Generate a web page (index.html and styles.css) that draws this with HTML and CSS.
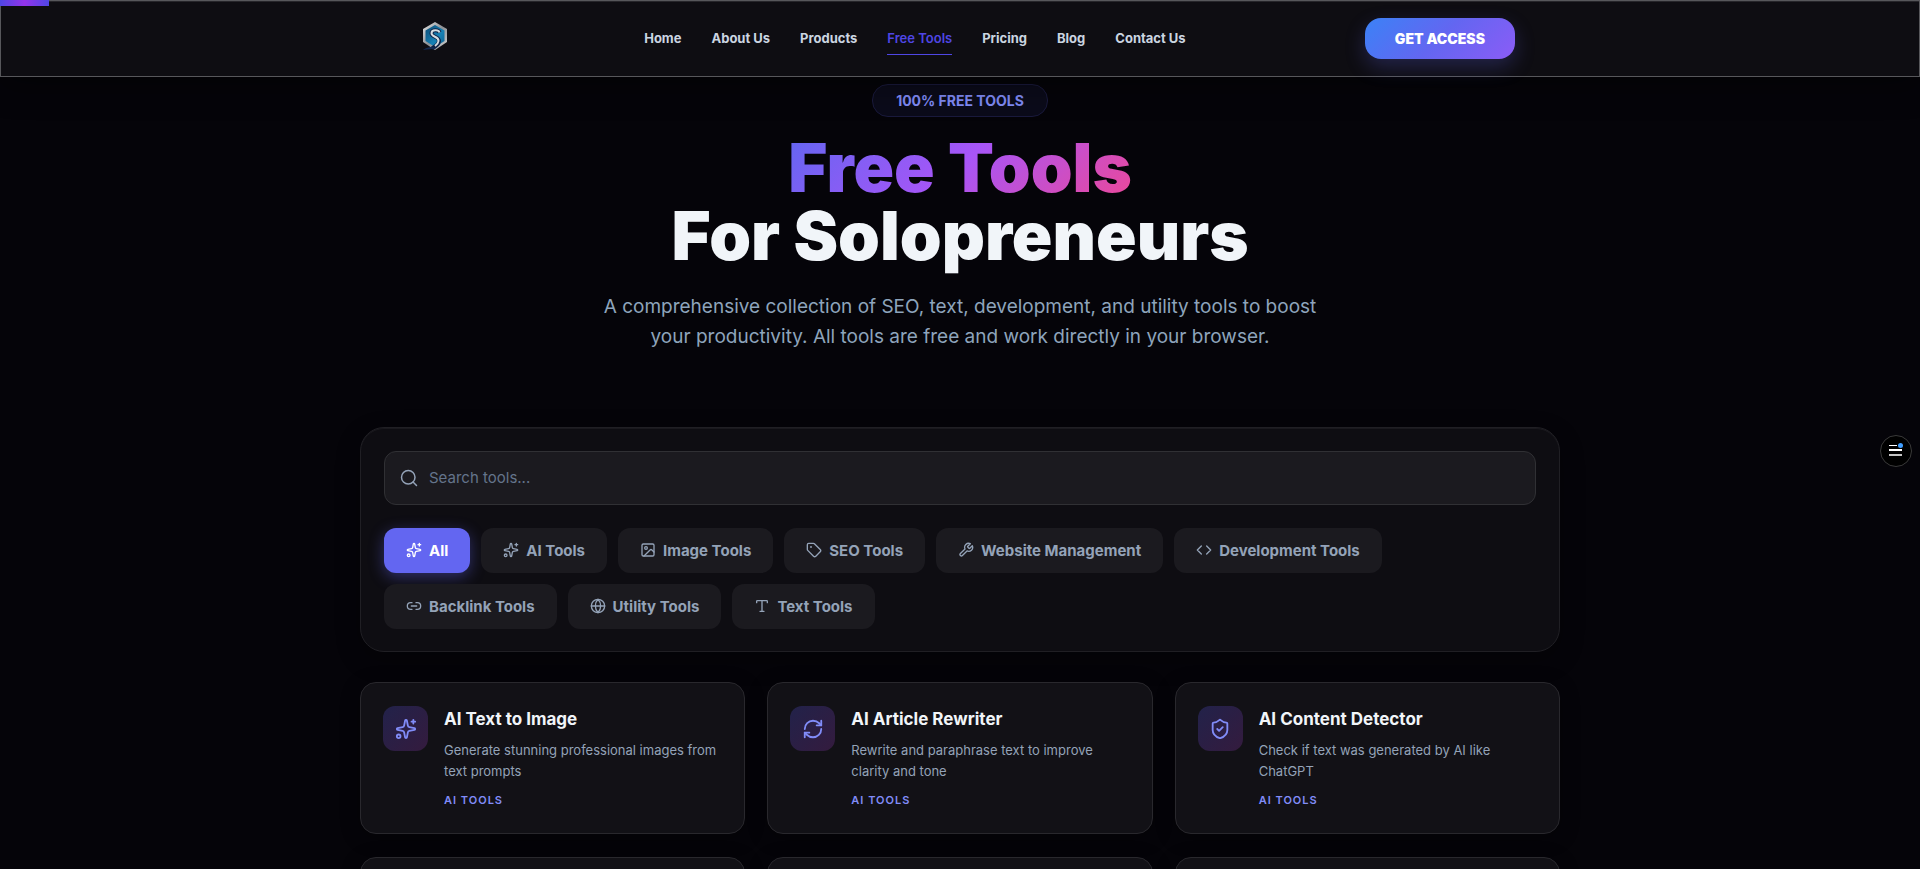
FILE: index.html
```html
<!DOCTYPE html>
<html lang="en">
<head>
    <meta charset="UTF-8">
    <meta name="viewport" content="width=device-width, initial-scale=1.0">
    <title>Free Tools For Solopreneurs</title>
    <link rel="stylesheet" href="styles.css">
</head>
<body>
    <!-- shared icons -->
    <svg class="icon-sprite" aria-hidden="true">
        <symbol id="icon-sparkles" viewBox="0 0 24 24">
            <path d="M11.017 2.814a1 1 0 0 1 1.966 0l1.051 5.558a2 2 0 0 0 1.594 1.594l5.558 1.051a1 1 0 0 1 0 1.966l-5.558 1.051a2 2 0 0 0-1.594 1.594l-1.051 5.558a1 1 0 0 1-1.966 0l-1.051-5.558a2 2 0 0 0-1.594-1.594l-5.558-1.051a1 1 0 0 1 0-1.966l5.558-1.051a2 2 0 0 0 1.594-1.594z"/>
            <path d="M20 2v4M22 4h-4"/>
            <circle cx="4" cy="20" r="2"/>
        </symbol>
        <symbol id="icon-search" viewBox="0 0 24 24">
            <circle cx="11" cy="11" r="9"/>
            <path d="m22 22-4.6-4.6"/>
        </symbol>
        <symbol id="icon-image" viewBox="0 0 24 24">
            <rect x="3" y="3" width="18" height="18" rx="2"/>
            <circle cx="9" cy="9" r="2"/>
            <path d="m21 15-3.086-3.086a2 2 0 0 0-2.828 0L6 21"/>
        </symbol>
        <symbol id="icon-tag" viewBox="0 0 24 24">
            <path d="M12.586 2.586A2 2 0 0 0 11.172 2H4a2 2 0 0 0-2 2v7.172a2 2 0 0 0 .586 1.414l8.704 8.704a2.426 2.426 0 0 0 3.42 0l6.58-6.58a2.426 2.426 0 0 0 0-3.42z"/>
            <circle cx="7.5" cy="7.5" r=".5" fill="currentColor"/>
        </symbol>
        <symbol id="icon-wrench" viewBox="0 0 24 24">
            <path d="M14.7 6.3a1 1 0 0 0 0 1.4l1.6 1.6a1 1 0 0 0 1.4 0l3.77-3.77a6 6 0 0 1-7.94 7.94l-6.91 6.91a2.12 2.12 0 0 1-3-3l6.91-6.91a6 6 0 0 1 7.94-7.94l-3.76 3.76z"/>
        </symbol>
        <symbol id="icon-code" viewBox="0 0 24 24">
            <path d="m16 18 6-6-6-6M8 6l-6 6 6 6"/>
        </symbol>
        <symbol id="icon-link" viewBox="0 0 24 24">
            <path d="M9 17H7A5 5 0 0 1 7 7h2M15 7h2a5 5 0 1 1 0 10h-2M8 12h8"/>
        </symbol>
        <symbol id="icon-globe" viewBox="0 0 24 24">
            <circle cx="12" cy="12" r="10"/>
            <path d="M12 2a14.5 14.5 0 0 0 0 20 14.5 14.5 0 0 0 0-20M2 12h20"/>
        </symbol>
        <symbol id="icon-type" viewBox="0 0 24 24">
            <path d="M12 4v16M4 7V5a1 1 0 0 1 1-1h14a1 1 0 0 1 1 1v2M9 20h6"/>
        </symbol>
        <symbol id="icon-refresh" viewBox="0 0 24 24">
            <path d="M3 12a9 9 0 0 1 9-9 9.75 9.75 0 0 1 6.74 2.74L21 8"/>
            <path d="M21 3v5h-5M21 12a9 9 0 0 1-9 9 9.75 9.75 0 0 1-6.74-2.74L3 16"/>
            <path d="M8 16H3v5"/>
        </symbol>
        <symbol id="icon-shield" viewBox="0 0 24 24">
            <path d="M20 13c0 5-3.5 7.5-7.66 8.95a1 1 0 0 1-.67-.01C7.5 20.5 4 18 4 13V6a1 1 0 0 1 1-1c2 0 4.5-1.2 6.24-2.72a1.17 1.17 0 0 1 1.52 0C14.51 3.81 17 5 19 5a1 1 0 0 1 1 1z"/>
            <path d="m9 12 2 2 4-4"/>
        </symbol>
    </svg>

    <div class="scroll-progress"></div>

    <header class="site-header">
        <div class="header-inner">
            <a href="#" class="logo" aria-label="Home">
                <svg viewBox="0 0 26 30" width="26" height="30">
                    <defs>
                        <linearGradient id="logoRim" x1="0" y1="0" x2="1" y2="1">
                            <stop offset="0" stop-color="#e8e8e8"/>
                            <stop offset="0.5" stop-color="#8c8f94"/>
                            <stop offset="1" stop-color="#d5d5d5"/>
                        </linearGradient>
                        <linearGradient id="logoFill" x1="0" y1="0" x2="1" y2="1">
                            <stop offset="0" stop-color="#0c4a74"/>
                            <stop offset="0.6" stop-color="#1681b5"/>
                            <stop offset="1" stop-color="#0f5d8c"/>
                        </linearGradient>
                    </defs>
                    <path d="M13 1 25 8v13l-12 8-12-8V8z" fill="url(#logoRim)"/>
                    <path d="M13 4 22.5 9.5v10.5l-9.5 6-9.5-6V9.5z" fill="url(#logoFill)"/>
                    <path d="M17.5 11.5c-1-3-8-3-8 .8 0 4 8 3 7.5 8-.3 3-4 5.5-7 7" fill="none" stroke="#0d2145" stroke-width="4"/>
                    <path d="M17.5 11.5c-1-3-8-3-8 .8 0 4 7.5 3 7 7.7-.2 2-1.5 3.5-3.5 5" fill="none" stroke="#d3dbe0" stroke-width="2"/>
                    <path d="M1 29c4-3 7-3 10-3l3 2c-4 0-8 0-13 1z" fill="#14284f"/>
                </svg>
            </a>
            <nav class="main-nav">
                <a href="#">Home</a>
                <a href="#">About Us</a>
                <a href="#">Products</a>
                <a href="#" class="active">Free Tools</a>
                <a href="#">Pricing</a>
                <a href="#">Blog</a>
                <a href="#">Contact Us</a>
            </nav>
            <button class="cta-button">GET ACCESS</button>
        </div>
    </header>

    <main class="container">
        <section class="hero">
            <span class="hero-badge">100% FREE TOOLS</span>
            <h1><span class="gradient-text">Free Tools</span><span>For Solopreneurs</span></h1>
            <p>A comprehensive collection of SEO, text, development, and utility tools to boost your productivity. All tools are free and work directly in your browser.</p>
        </section>

        <section class="filter-panel">
            <div class="search-box">
                <label for="toolSearch" aria-label="Search tools"><svg class="icon"><use href="#icon-search"/></svg></label>
                <input type="text" id="toolSearch" placeholder="Search tools...">
            </div>
            <div class="filters">
                <button class="filter-button active"><svg class="icon"><use href="#icon-sparkles"/></svg>All</button>
                <button class="filter-button"><svg class="icon"><use href="#icon-sparkles"/></svg>AI Tools</button>
                <button class="filter-button"><svg class="icon"><use href="#icon-image"/></svg>Image Tools</button>
                <button class="filter-button"><svg class="icon"><use href="#icon-tag"/></svg>SEO Tools</button>
                <button class="filter-button"><svg class="icon"><use href="#icon-wrench"/></svg>Website Management</button>
                <button class="filter-button"><svg class="icon"><use href="#icon-code"/></svg>Development Tools</button>
                <button class="filter-button"><svg class="icon"><use href="#icon-link"/></svg>Backlink Tools</button>
                <button class="filter-button"><svg class="icon"><use href="#icon-globe"/></svg>Utility Tools</button>
                <button class="filter-button"><svg class="icon"><use href="#icon-type"/></svg>Text Tools</button>
            </div>
        </section>

        <section class="tools-grid">
            <a href="#" class="tool-card">
                <span class="tool-icon"><svg class="icon"><use href="#icon-sparkles"/></svg></span>
                <div class="tool-info">
                    <h3>AI Text to Image</h3>
                    <p>Generate stunning professional images from text prompts</p>
                    <span class="tool-category">AI TOOLS</span>
                </div>
            </a>
            <a href="#" class="tool-card">
                <span class="tool-icon"><svg class="icon"><use href="#icon-refresh"/></svg></span>
                <div class="tool-info">
                    <h3>AI Article Rewriter</h3>
                    <p>Rewrite and paraphrase text to improve clarity and tone</p>
                    <span class="tool-category">AI TOOLS</span>
                </div>
            </a>
            <a href="#" class="tool-card">
                <span class="tool-icon"><svg class="icon"><use href="#icon-shield"/></svg></span>
                <div class="tool-info">
                    <h3>AI Content Detector</h3>
                    <p>Check if text was generated by AI like ChatGPT</p>
                    <span class="tool-category">AI TOOLS</span>
                </div>
            </a>
            <a href="#" class="tool-card"></a>
            <a href="#" class="tool-card"></a>
            <a href="#" class="tool-card"></a>
        </section>
    </main>

    <button class="side-toggle" aria-label="Open menu">
        <svg viewBox="0 0 16 16" width="16" height="16">
            <path d="M1 2.5h8" stroke="#fff" stroke-width="1"/>
            <path d="M1 7h13" stroke="#fff" stroke-width="2"/>
            <path d="M1 12h13" stroke="#c4c4c4" stroke-width="2"/>
            <circle cx="12.5" cy="2.5" r="2.5" fill="#409eff"/>
        </svg>
    </button>
</body>
</html>
```
FILE: styles.css
```css
* {
    box-sizing: border-box;
    margin: 0;
    padding: 0;
}

body {
    height: 100vh;
    overflow: hidden;
    font-family: Inter, 'Liberation Sans', sans-serif;
    background: #050409;
    color: #f1f5f9;
}

a {
    color: inherit;
    text-decoration: none;
}

button,
input {
    font-family: inherit;
}

button {
    border: none;
    cursor: pointer;
}

.icon-sprite {
    position: absolute;
    width: 0;
    height: 0;
}

.icon {
    width: 16px;
    height: 16px;
    flex-shrink: 0;
    fill: none;
    stroke: currentColor;
    stroke-width: 2;
    stroke-linecap: round;
    stroke-linejoin: round;
}

/* Header */
.scroll-progress {
    position: fixed;
    top: 0;
    left: 0;
    z-index: 20;
    width: 49px;
    height: 6px;
    background: linear-gradient(90deg, #4f46e5, #9333ea, #4f46e5);
}

.site-header {
    position: relative;
    height: 77px;
    background: #0e0d12;
    border: 1px solid #57575b;
    box-shadow: 0 8px 32px rgba(0, 0, 0, 0.4), inset 0 1px 0 rgba(255, 255, 255, 0.1);
}

.header-inner {
    display: flex;
    align-items: center;
    justify-content: space-between;
    max-width: 1110px;
    height: 100%;
    margin: 0 auto;
}

.logo {
    display: flex;
    justify-content: center;
    width: 60px;
    padding-bottom: 6px;
}

.main-nav {
    display: flex;
    gap: 30px;
}

.main-nav a {
    padding: 8px 0 7px;
    border-bottom: 1px solid transparent;
    font-size: 13px;
    font-weight: 700;
    line-height: 17px;
    color: #cbd5e1;
}

.main-nav a.active {
    font-weight: 600;
    color: #4f46e5;
    border-bottom-color: #4f46e5;
}

.cta-button {
    padding: 12px 30px;
    border-radius: 16px;
    font-size: 14px;
    font-weight: 900;
    line-height: 17px;
    color: #fff;
    background: linear-gradient(135deg, #3b82f6 0%, #6366f1 50%, #8b5cf6 100%);
    box-shadow: 0 8px 20px rgba(99, 102, 241, 0.25);
}

/* Hero */
.container {
    max-width: 1200px;
    margin: 0 auto;
}

.hero {
    display: flex;
    flex-direction: column;
    align-items: center;
    padding: 7px 0 75px;
    text-align: center;
}

.hero-badge {
    padding: 8px 23px;
    border: 1px solid #1a1a3d;
    border-radius: 16px;
    font-size: 14px;
    font-weight: 700;
    line-height: 15px;
    color: #818cf8;
    background: #0b0b1a;
}

.hero h1 {
    display: flex;
    flex-direction: column;
    align-items: center;
    margin-top: 17px;
    font-size: 67px;
    font-weight: 900;
    line-height: 68px;
}

.gradient-text {
    color: transparent;
    background: linear-gradient(135deg, #6366f1 0%, #a855f7 50%, #ec4899 100%);
    -webkit-background-clip: text;
    background-clip: text;
}

.hero p {
    max-width: 720px;
    margin-top: 22px;
    font-size: 19px;
    line-height: 30px;
    color: #8ea4bc;
}

/* Search and filters */
.filter-panel {
    padding: 23px 23px 22px;
    border: 1px solid #201f24;
    border-radius: 24px;
    background: #0e0d12;
    box-shadow: 0 8px 24px rgba(0, 0, 0, 0.3), inset 0 1px 0 rgba(255, 255, 255, 0.05);
}

.search-box {
    display: flex;
    align-items: center;
    height: 54px;
    padding: 0 15px;
    border: 1px solid #303034;
    border-radius: 12px;
    background: #1b1a1f;
}

.search-box label {
    display: flex;
    color: #94a3b8;
}

.search-box .icon {
    width: 18px;
    height: 18px;
}

.search-box input {
    flex: 1;
    padding: 0 11px 1px;
    border: none;
    outline: none;
    font-size: 15px;
    color: #f1f5f9;
    background: transparent;
}

.search-box input::placeholder {
    color: #64748b;
}

.filters {
    display: flex;
    flex-wrap: wrap;
    gap: 11px;
    margin-top: 23px;
}

.filter-button {
    display: flex;
    align-items: center;
    gap: 7px;
    height: 45px;
    padding: 0 22px 1px;
    border-radius: 12px;
    font-size: 15px;
    font-weight: 700;
    color: #94a3b8;
    background: #1b1a1f;
}

.filter-button.active {
    color: #fff;
    background: #6366f1;
    box-shadow: 0 4px 15px rgba(99, 102, 241, 0.4);
}

/* Tool cards */
.tools-grid {
    display: grid;
    grid-template-columns: repeat(3, 1fr);
    gap: 23px 22px;
    margin-top: 30px;
}

.tool-card {
    display: flex;
    gap: 16px;
    min-height: 152px;
    padding: 23px 22px;
    border: 1px solid #29282d;
    border-radius: 16px;
    background: #121116;
    box-shadow: 0 4px 20px rgba(0, 0, 0, 0.3);
}

.tool-icon {
    display: flex;
    align-items: center;
    justify-content: center;
    flex-shrink: 0;
    width: 45px;
    height: 45px;
    border-radius: 12px;
    color: #818cf8;
    background: linear-gradient(135deg, #22224a 0%, #341b3e 100%);
}

.tool-icon .icon {
    width: 22px;
    height: 22px;
}

.tool-info h3 {
    font-size: 17px;
    font-weight: 700;
    line-height: 26px;
}

.tool-info p {
    margin-top: 8px;
    font-size: 13px;
    line-height: 21px;
    color: #94a3b8;
}

.tool-category {
    display: block;
    margin-top: 11px;
    font-size: 11px;
    font-weight: 600;
    line-height: 15px;
    letter-spacing: 1px;
    color: #818cf8;
}

/* Floating toggle */
.side-toggle {
    position: fixed;
    top: 50%;
    right: 8px;
    display: flex;
    align-items: center;
    justify-content: center;
    width: 32px;
    height: 32px;
    border: 1px solid #3a3a3a;
    border-radius: 50%;
    background: #000;
}
```
